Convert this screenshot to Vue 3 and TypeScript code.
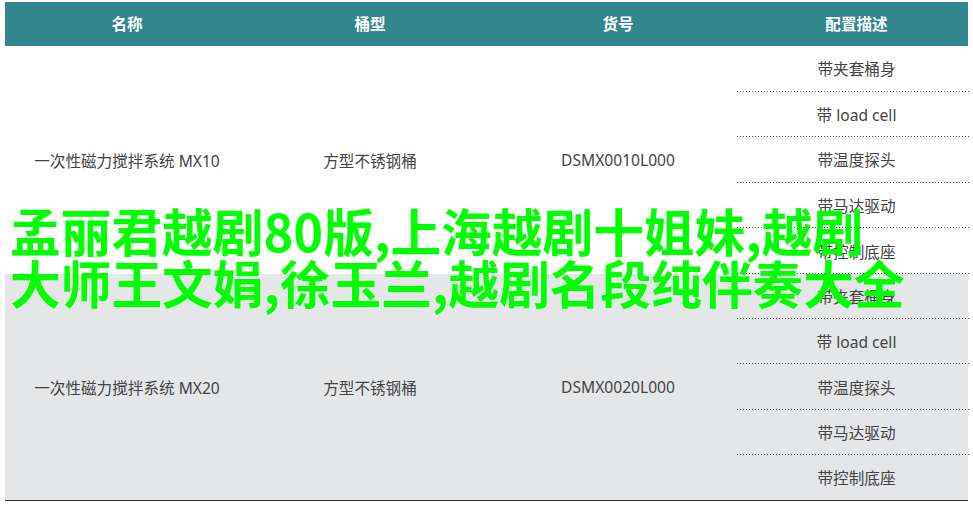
<script setup lang="ts">
interface Group { name: string; type: string; code: string; shaded: boolean }
const headers: string[] = ['名称', '桶型', '货号', '配置描述']
const options: string[] = ['带夹套桶身', '带 load cell', '带温度探头', '带马达驱动', '带控制底座']
const groups: Group[] = [
  { name: '一次性磁力搅拌系统 MX10', type: '方型不锈钢桶', code: 'DSMX0010L000', shaded: false },
  { name: '一次性磁力搅拌系统 MX20', type: '方型不锈钢桶', code: 'DSMX0020L000', shaded: true },
]
</script>

<template>
  <div class="page">
    <div class="table">
      <div class="row head">
        <div v-for="h in headers" :key="h" class="cell">{{ h }}</div>
      </div>
      <div v-for="g in groups" :key="g.code" class="row group" :class="{ shaded: g.shaded }">
        <div class="cell">{{ g.name }}</div>
        <div class="cell">{{ g.type }}</div>
        <div class="cell">{{ g.code }}</div>
        <div class="opts">
          <div v-for="o in options" :key="o" class="opt">{{ o }}</div>
        </div>
      </div>
    </div>
    <h1 class="title">孟丽君越剧80版,上海越剧十姐妹,越剧大师王文娟,徐玉兰,越剧名段纯伴奏大全</h1>
  </div>
</template>

<style>
html, body { margin: 0; background: #fff; }
</style>

<style scoped>
.page {
  position: relative;
  width: 973px;
  height: 505px;
  overflow: hidden;
  padding: 2px 5px 0;
  box-sizing: border-box;
  font-family: "Noto Sans", "Noto Sans CJK SC", sans-serif;
  color: #444;
}
.table {
  width: 963px;
}
.row {
  display: grid;
  grid-template-columns: 244px 242px 254px 223px;
}
.cell {
  display: flex;
  align-items: center;
  justify-content: center;
  font-size: 15.6px;
}
.head {
  height: 44px;
  background: #32868c;
  color: #fff;
}
.head .cell {
  font-weight: 700;
  padding-bottom: 2px;
}
.group {
  height: 228px;
}
.shaded {
  height: 226px;
  background: #e5e6e8;
  border-bottom: 1px solid #333;
}
.opts {
  display: flex;
  flex-direction: column;
  margin: 0 -2px 0 -8px;
}
.opt {
  flex: 1;
  display: flex;
  align-items: center;
  justify-content: center;
  padding-left: 6px;
  font-size: 15.6px;
  background-image: linear-gradient(to right, #444 1px, transparent 1px);
  background-size: 3px 1px;
  background-position: left bottom;
  background-repeat: repeat-x;
}
.shaded .opt:last-child {
  background-image: none;
}
.title {
  position: absolute;
  left: 10px;
  top: 205px;
  width: 902px;
  margin: 0;
  font-family: "Noto Sans CJK SC", sans-serif;
  font-size: 50.7px;
  line-height: 51.5px;
  font-weight: 700;
  color: #00ff00;
}
</style>
